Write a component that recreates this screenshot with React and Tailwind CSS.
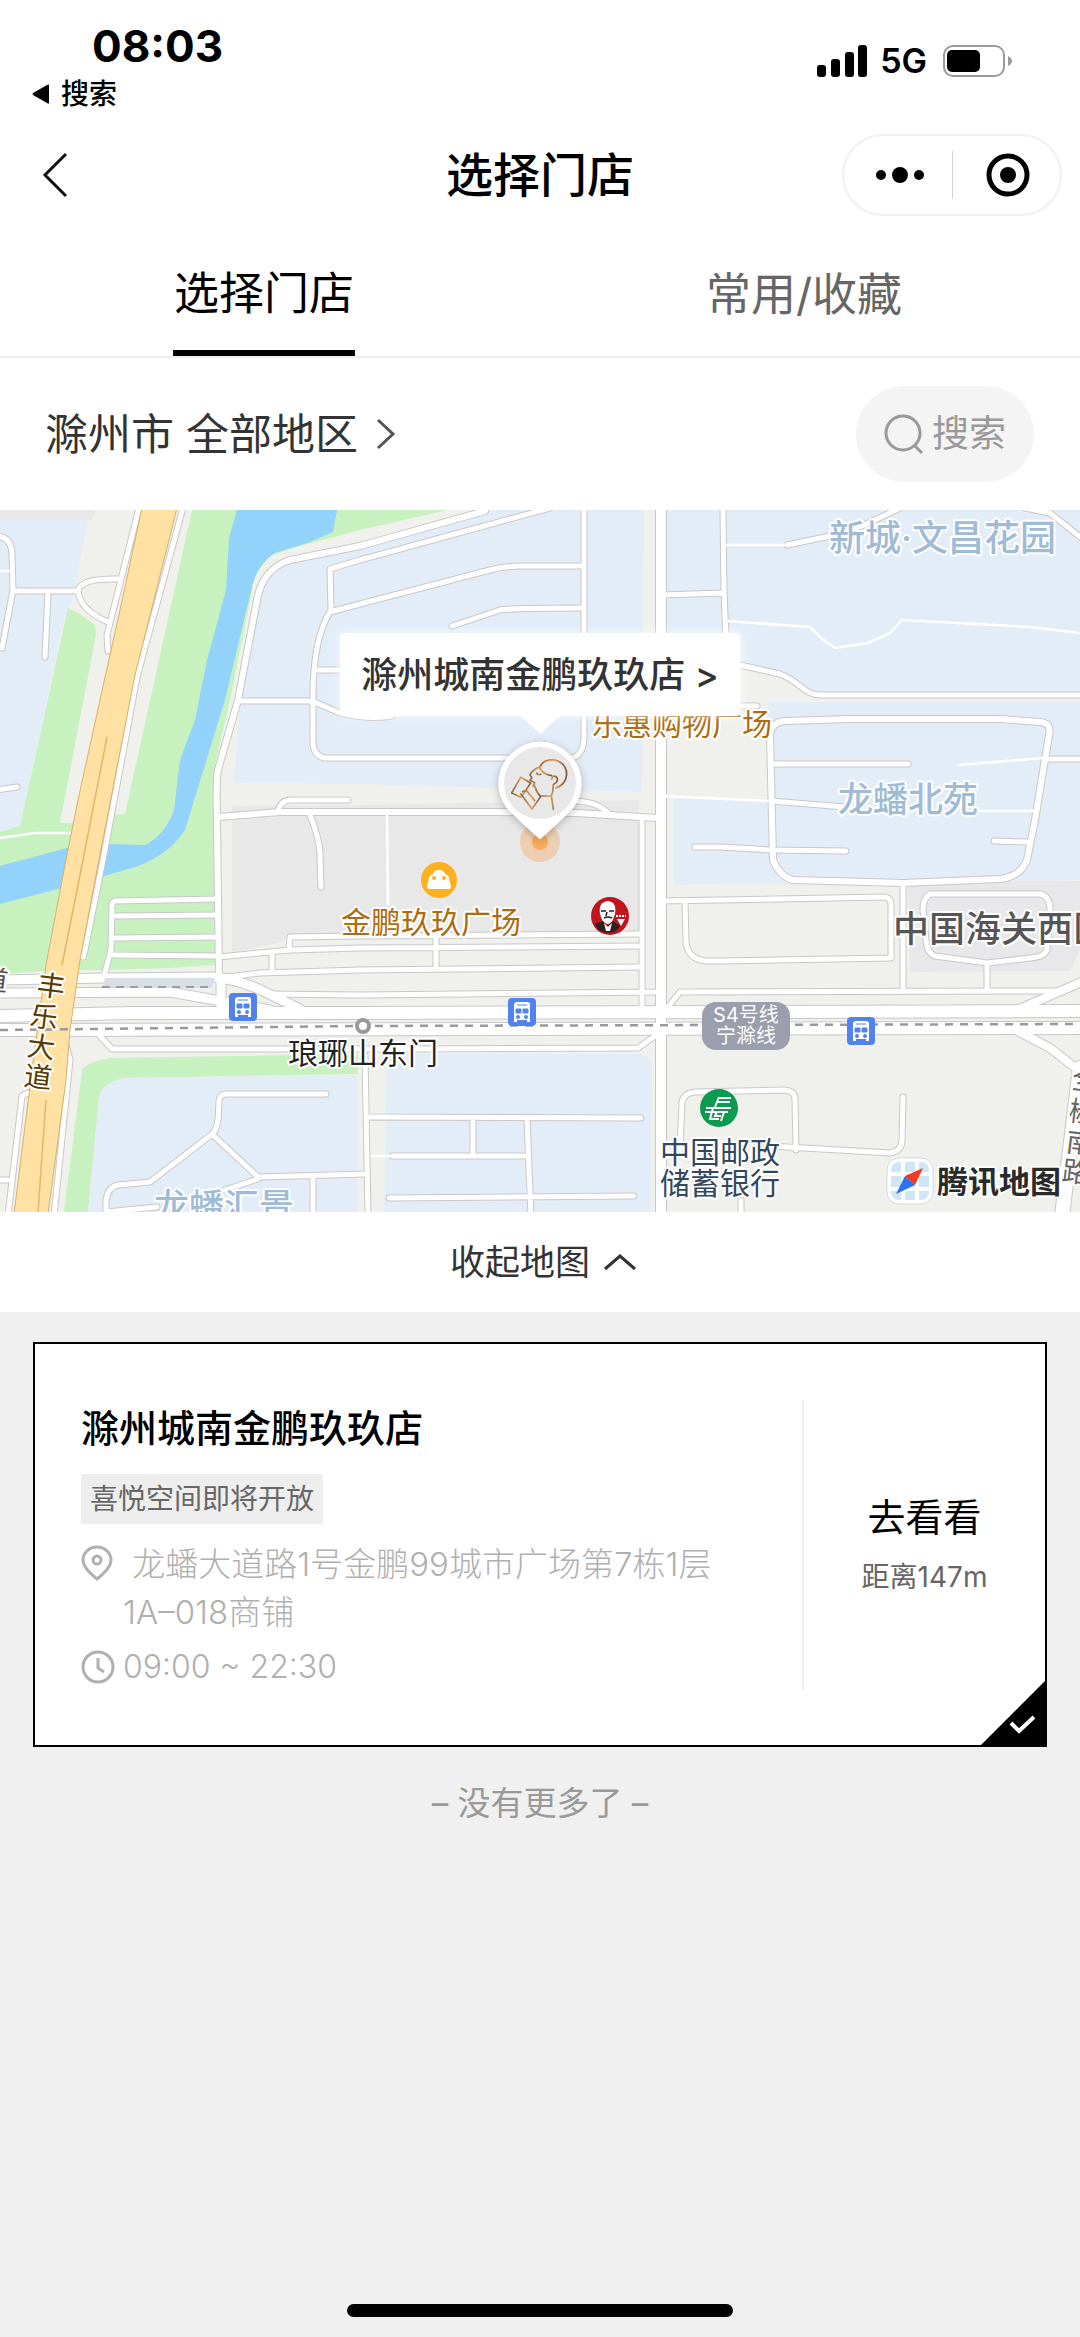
const blocks = [
  { fill: "#e8e8e8", d: "M0 0H95L92 10H0Z" },
  { fill: "#e3edf8", d: "M0 10H88L72 92L62 118L20 316L0 322Z" },
  { fill: "#c7f2c0", d: "M68 98L80 104L95 115L96 125L60 313H80L46 461L0 464V322L20 316Z" },
  { fill: "#c7f2c0", d: "M192 0H448L360 20L300 36L270 46L255 66L230 190L215 255V455L170 458L105 460H78L104 333L115 305L125 304Z" },
  { fill: "#93d2fb", d: "M237 0L229 28L226 80L207 150L195 210L180 250L174 300Q165 325 145 335L108 334L67 338L0 356V394L62 378L125 360Q165 350 185 320L205 255L225 190L250 85Q255 55 275 43L310 32L333 22L337 0Z" },
  { fill: "#e3edf8", d: "M240 195L234 273L360 274L642 282L644 0H485L360 36L290 50L264 66Z" },
  { fill: "#e8e8e8", d: "M232 296L360 295L639 290V420L560 422L290 430L232 443Z" },
  { fill: "#e3edf8", d: "M667 0H1080V183H815L785 166L740 156L667 140Z" },
  { fill: "#e3edf8", d: "M768 192H1080V370L674 375V288L768 291Z" },
  { fill: "#e8e8ea", d: "M907 371H1080V440L1070 461L910 462Z" },
  { fill: "#c7f2c0", d: "M64 702L82 560Q84 553 110 548L358 544V564L125 568Q100 574 99 588L88 702Z" },
  { fill: "#e3edf8", d: "M88 702L99 590Q102 572 125 568L357 565V702Z" },
  { fill: "#e3edf8", d: "M387 548Q387 544 395 544H640Q652 545 652 558L651 702H384Z" },
];

const roads = [
  { w: 5, d: "M-2 26Q12 28 12 45L13 80L2 138" },
  { w: 5, d: "M13 81H78M48 82L45 147M118 69Q80 68 78 81Q80 100 108 112M-3 280L17 277" },
  { w: 5, d: "M139 -2L107 125L108 141" },
  { w: 5, d: "M183 -2L137 167L103 350L85 440L83 447" },
  { w: 6, d: "M485 1L360 36L290 50Q265 58 258 85L238 190L218 260Q216 270 217 310L219 470" },
  { w: 5, d: "M550 -2L360 50L330 59L331 100" },
  { w: 5, d: "M582 56H520Q505 56 490 60L360 94L330 102Q312 130 313 195V235Q315 248 328 248H572Q584 245 584 225V-2" },
  { w: 5, d: "M452 116L500 100Q510 98 582 98M315 160H350M239 191H312L340 203Q370 210 392 206" },
  { w: 10, d: "M661 -4V706" },
  { w: 5, d: "M723 -2L724 80L726 130M661 85L723 83" },
  { w: 5, d: "M661 140L740 155L780 164Q790 168 800 176Q810 185 820 185H1084M738 196H757" },
  { w: 6, d: "M773 350L770 225Q771 212 785 211L850 209H1000L1040 212Q1052 213 1049 225L1035 310L1027 350Q1020 367 1000 369L903 373L793 370Q780 367 773 350Z" },
  { w: 5, d: "M772 254H908M1044 249H1084M771 291L845 297M994 331L1029 332M695 337H720L771 340L846 341" },
  { w: 5, d: "M787 35L830 26L864 15L900 -2M1025 -2L1050 3L1084 30" },
  { w: 6, d: "M218 307L280 302H500L577 303L657 308" },
  { w: 5, d: "M278 301Q280 291 290 290H348M310 305Q320 330 320 345L321 377M575 291Q598 292 608 303" },
  { w: 5, d: "M642 308V497" },
  { w: 5, d: "M218 389L115 391Q112 392 112 396L111 440L104 466M113 406L218 405M113 428L218 427M113 445L218 446" },
  { w: 5, d: "M219 447L290 440L360 438L638 436M289 438L290 427L360 426L640 424M272 442V462M436 425V458" },
  { w: 5, d: "M219 468L260 463L360 460L640 457" },
  { w: 5, d: "M265 484L360 485L661 482M668 497L680 482L1060 481" },
  { w: 9, d: "M-4 470L105 468L215 467Q240 470 265 482L300 499" },
  { w: 9, d: "M-4 483L170 482L215 490L270 500M221 470V503" },
  { w: 12, d: "M-4 506L130 503H360L1084 501" },
  { w: 12, d: "M-4 520L1084 518" },
  { w: 5, d: "M98 524L112 539H415L638 538L655 526" },
  { w: 5, d: "M66 535L70 550L54 706M28 583L22 586L8 706M-3 670H8" },
  { w: 5, d: "M326 584H225Q219 585 219 592L218 610Q216 622 211 625L150 672L118 675Q108 677 106 690V706M213 625L258 667L365 664M258 669L225 680M313 668V706M106 702L157 697" },
  { w: 5, d: "M365 545L368 706M369 607L641 608M473 609V645M392 646H525M527 609L531 706M389 688L634 686" },
  { w: 5, d: "M680 640L682 592Q684 583 695 582L785 580Q795 581 795 590L796 640M770 636L890 643Q902 641 902 630L903 587M741 690V706" },
  { w: 5, d: "M661 391L885 387Q891 388 891 395V448L720 451H705Q687 448 686 432L685 391" },
  { w: 5, d: "M903 373V481M930 384H1040Q1050 386 1050 400L1047 440Q1044 447 1030 448L987 453L935 446Q927 443 926 430L923 400Q923 388 930 384ZM987 453V481" },
  { w: 8, d: "M1012 502L1084 471M1012 518L1050 538L1078 560" },
  { w: 14, d: "M1080 558L1062 706" },
];

const footpaths =
  "M0 61H12M0 328L35 323H72M387 303L388 395M723 35H787M727 111L810 117L822 129L835 138L868 133L890 123L902 110L1030 117L1080 123M958 255L1043 248M661 286L770 291M970 301H1035M371 646H392";

const labels = [
  { text: "新城·文昌花园", x: 829, y: 41, style: "text-[36px] font-medium fill-[#a0bbd5]" },
  { text: "龙蟠北苑", x: 838, y: 302, style: "text-[35px] font-medium fill-[#a0bbd5]" },
  { text: "龙蟠汇景", x: 154, y: 709, style: "text-[35px] font-medium fill-[#a0bbd5]" },
  { text: "乐惠购物广场", x: 592, y: 225, style: "text-[30px] fill-[#ad6c10]" },
  { text: "金鹏玖玖广场", x: 341, y: 423, style: "text-[30px] fill-[#ad6c10]" },
  { text: "中国海关西区", x: 893, y: 432, style: "text-[36px] font-medium fill-[#555555]" },
  { text: "琅琊山东门", x: 288, y: 554, style: "text-[30px] fill-[#222222]" },
  { text: "中国邮政", x: 660, y: 653, style: "text-[30px] fill-[#33475f]" },
  { text: "储蓄银行", x: 660, y: 684, style: "text-[30px] fill-[#33475f]" },
];

// road names run along the road, one rotated character at a time
const roadNames = [
  { text: "丰", x: 51, y: 476, style: "fill-[#5a3a00]" },
  { text: "乐", x: 44, y: 507, style: "fill-[#5a3a00]" },
  { text: "大", x: 41, y: 537, style: "fill-[#5a3a00]" },
  { text: "道", x: 38, y: 567, style: "fill-[#5a3a00]" },
  { text: "道", x: -6, y: 470, style: "fill-[#555555]" },
  { text: "全", x: 1086, y: 570, style: "fill-[#666666]" },
  { text: "椒", x: 1083, y: 602, style: "fill-[#666666]" },
  { text: "南", x: 1080, y: 633, style: "fill-[#666666]" },
  { text: "路", x: 1076, y: 662, style: "fill-[#666666]" },
];

const busStops = [
  { x: 229, y: 483 },
  { x: 508, y: 488 },
  { x: 847, y: 507 },
];

const store = {
  name: "滁州城南金鹏玖玖店",
  tag: "喜悦空间即将开放",
  address: "龙蟠大道路1号金鹏99城市广场第7栋1层1A–018商铺",
  hours: "09:00 ~ 22:30",
  distance: "距离147m",
};

function StatusBar() {
  return (
    <div className="flex justify-between pl-8 pr-[68px]">
      <div className="pt-6">
        <div className="pl-[60px] text-[44px] leading-11 font-bold">08:03</div>
        <button className="mt-3 flex items-center gap-[10px] text-[28px] leading-7 font-medium">
          <svg className="w-[19px] h-5" viewBox="0 0 19 20">
            <path d="M17 1V19Q17 20 15 19L1 11Q0 10 1 9L15 1Q17 0 17 1Z" />
          </svg>
          搜索
        </button>
      </div>

      <div className="mt-[45px] h-8 flex items-center">
        <svg className="w-[51px] h-8" viewBox="0 0 51 32">
          <rect x="0" y="20" width="9" height="12" rx="3" />
          <rect x="14" y="14" width="9" height="18" rx="3" />
          <rect x="28" y="7" width="9" height="25" rx="3" />
          <rect x="41" y="0" width="9" height="32" rx="3" />
        </svg>
        <span className="ml-3 text-[34px] leading-8 font-semibold">5G</span>
        <svg className="ml-4 w-[69px] h-8" viewBox="0 0 69 32">
          <rect x="1" y="1" width="60" height="30" rx="9" fill="none" stroke="#9a9a9a" strokeWidth="2" />
          <rect x="4" y="5" width="33" height="22" rx="5" />
          <path d="M65 11Q69 13 69 16Q69 19 65 21Z" fill="#9a9a9a" />
        </svg>
      </div>
    </div>
  );
}

function NavBar() {
  return (
    <div className="mt-3 h-[110px] flex items-center justify-between pl-10 pr-[18px]">
      <div className="flex-1">
        <button className="block" aria-label="返回">
          <svg className="w-[30px] h-12" viewBox="0 0 30 48" fill="none" stroke="#111" strokeWidth="3">
            <path d="M26 3L5 24L26 45" />
          </svg>
        </button>
      </div>

      <h1 className="text-[47px] leading-[56px] font-medium pr-[22px]">选择门店</h1>

      <div className="flex-1 flex justify-end">
        <div className="w-[220px] h-[82px] rounded-full border-2 border-[#f1f1f1] flex items-center">
          <button className="flex-1 flex justify-center pl-1" aria-label="更多">
            <svg className="w-12 h-5" viewBox="0 0 48 20">
              <circle cx="5" cy="10" r="5" />
              <circle cx="24" cy="10" r="8" />
              <circle cx="43" cy="10" r="5" />
            </svg>
          </button>
          <div className="w-px h-12 bg-[#d5d5d5]"></div>
          <button className="flex-1 flex justify-center pl-1" aria-label="关闭">
            <svg className="w-11 h-11" viewBox="0 0 44 44">
              <circle cx="22" cy="22" r="19" fill="none" stroke="#000" strokeWidth="5" />
              <circle cx="22" cy="22" r="8" />
            </svg>
          </button>
        </div>
      </div>
    </div>
  );
}

function Tabs() {
  return (
    <div className="h-32 grid grid-cols-2 border-b-2 border-[#eeeeee] text-[45px]">
      <div className="flex justify-center pr-3">
        <button className="border-b-[6px] border-black pt-2 px-px">选择门店</button>
      </div>
      <div className="flex justify-center pr-3">
        <button className="pt-1 text-[#666666]">常用/收藏</button>
      </div>
    </div>
  );
}

function BusStop({ x, y }) {
  return (
    <g transform={`translate(${x} ${y})`}>
      <rect width="28" height="28" rx="4" fill="#5282ee" />
      <path d="M6 24V7Q6 4 9 4H19Q22 4 22 7V24H19V22H9V24Z" fill="#fff" />
      <path d="M9 7H19M8 11H13V15H8ZM15 11H20V15H15Z" fill="#5282ee" stroke="#5282ee" />
      <circle cx="10" cy="19" r="2" fill="#5282ee" />
      <circle cx="18" cy="19" r="2" fill="#5282ee" />
    </g>
  );
}

function MapCanvas() {
  return (
    <svg className="block w-full h-full" viewBox="0 0 1080 702" preserveAspectRatio="xMidYMid slice">
      <defs>
        <linearGradient id="copper" x1="0" y1="0" x2="1" y2="0">
          <stop offset="0" stopColor="#94643f" />
          <stop offset="0.55" stopColor="#dfa05c" />
          <stop offset="1" stopColor="#86532f" />
        </linearGradient>
        <filter id="pinShadow" x="-30%" y="-30%" width="160%" height="160%">
          <feDropShadow dx="0" dy="2" stdDeviation="4" floodOpacity="0.25" />
        </filter>
      </defs>

      <rect width="1080" height="702" fill="#f0f1ec" />
      {blocks.map((b) => (
        <path key={b.d} d={b.d} fill={b.fill} />
      ))}

      {/* streets: casing first, then the white surface */}
      <g fill="none" stroke="#c9c8c8" strokeLinecap="round" strokeLinejoin="round">
        {roads.map((r) => (
          <path key={r.d} d={r.d} strokeWidth={r.w + 2} />
        ))}
      </g>
      <path d={footpaths} fill="none" stroke="#fff" strokeWidth="2.5" />
      <g fill="none" stroke="#fff" strokeLinecap="round" strokeLinejoin="round">
        {roads.map((r) => (
          <path key={r.d} d={r.d} strokeWidth={r.w} />
        ))}
      </g>
      <path d="M105 468H215L212 478L102 477Z" fill="#dadfe6" />
      <path d="M102 477H212" stroke="#888" strokeWidth="1.5" strokeDasharray="8 6" />

      {/* main avenue */}
      <path
        d="M142 -2L120 100L100 190L78 290L65 355L46 455L32 560L14 704H48L66 570L70 520L80 450L98 355L135 165L177 -2Z"
        fill="#ffe1a3"
        stroke="#dcae69"
      />
      <path d="M107 227L82 355L62 455M46 590L38 702" stroke="#e8b565" strokeWidth="1.5" fill="none" />

      {/* rail line */}
      <path d="M0 520L363 516L1080 514" stroke="#999" strokeWidth="2.5" strokeDasharray="8 7" fill="none" />
      <circle cx="363" cy="516" r="6" fill="#fff" stroke="#999" strokeWidth="4" />

      <g stroke="#fff" strokeWidth="4" strokeLinejoin="round" className="[paint-order:stroke]">
        {labels.map((l) => (
          <text key={l.text} x={l.x} y={l.y} className={l.style}>
            {l.text}
          </text>
        ))}
        {roadNames.map((c) => (
          <text
            key={`${c.text}${c.x}`}
            transform={`translate(${c.x} ${c.y}) rotate(7)`}
            y="10"
            textAnchor="middle"
            className={`text-[28px] ${c.style}`}
          >
            {c.text}
          </text>
        ))}
        <text x="937" y="683" className="text-[31px] font-bold fill-[#2a2a2a]">
          腾讯地图
        </text>
      </g>

      {busStops.map((s) => (
        <BusStop key={s.x} x={s.x} y={s.y} />
      ))}

      {/* metro badge */}
      <rect x="702" y="492" width="88" height="48" rx="14" fill="#9b9eac" />
      <g fill="#fff" textAnchor="middle" className="text-[20px]">
        <text x="746" y="512">S4号线</text>
        <text x="746" y="533">宁滁线</text>
      </g>

      {/* shopping mall */}
      <circle cx="439" cy="370" r="18" fill="#fcb01f" />
      <path d="M433 364Q434 360 439 360Q444 360 445 364L447 365Q449 366 449 368L451 377Q451 379 449 379H429Q427 379 427 377L429 368Q429 366 431 365Z" fill="#fff" />
      <circle cx="434" cy="368" r="2" fill="#fcb01f" />
      <circle cx="444" cy="368" r="2" fill="#fcb01f" />

      {/* fried chicken */}
      <circle cx="610" cy="406" r="19" fill="#c1141d" />
      <path d="M600 404Q598 392 608 391Q617 392 615 404L612 412Q607 417 602 410Z" fill="#fff" />
      <path d="M601 401H606M609 401H614M607 402L606 406M604 408Q608 406 612 408" stroke="#222" strokeWidth="1.5" fill="none" />
      <path d="M595 414L603 411L607 416L613 411L620 416L616 421Q607 425 598 420Z" fill="#2b2225" />
      <path d="M604 413L608 417L612 413L610 421H606Z" fill="#fff" />
      <path d="M617 409H625L621 416Z" fill="#fff" />
      <path d="M616 406H626" stroke="#fff" strokeWidth="2" strokeDasharray="2 1" />

      {/* postal bank */}
      <circle cx="719" cy="598" r="19" fill="#0a9a50" />
      <g fill="none" stroke="#fff" strokeWidth="2">
        <path d="M718 588H731M716 592H730M719 587L715 597M706 598H731M705 602H728" />
        <path d="M713 598L710 609H719M724 602L721 611M717 602L715 606H721" />
      </g>

      {/* map provider */}
      <rect x="887" y="648" width="46" height="46" rx="12" fill="#fff" stroke="#d4d9e2" />
      <rect x="891" y="652" width="38" height="38" rx="8" fill="#cfe6f8" />
      <path d="M891 664H929M891 679H929M903 652V690M917 652V690" stroke="#fff" strokeWidth="4" />
      <path d="M923 658L915 675L905 666Z" fill="#f23a22" />
      <path d="M896 684L905 666L915 675Z" fill="#2b74ee" />

      {/* current position */}
      <circle cx="540" cy="332" r="20" fill="#f6a75c" fillOpacity="0.4" />
      <circle cx="540" cy="332" r="8" fill="#f9ac5d" />

      {/* store pin */}
      <path
        d="M540 329L514 305A41 41 0 1 1 566 305Z"
        fill="#fff"
        stroke="#fff"
        strokeLinejoin="round"
        filter="url(#pinShadow)"
      />
      <circle cx="540" cy="273" r="36" fill="#e8e8e8" />
      <g transform="translate(360 0) scale(0.3333)" fill="none" stroke="url(#copper)" strokeWidth="5" strokeLinejoin="round" strokeLinecap="round">
        <path d="M482 802L512 819L483 862L455 849Z" />
        <path d="M483 852L516 897L542 860Q530 848 524 828M488 845L500 842L524 872" />
        <path d="M540 771Q548 750 578 749Q620 756 620 794Q617 824 588 834" />
        <path d="M540 771Q520 776 510 795L516 803L510 810L524 818L520 828M540 775Q550 793 575 797" />
        <path d="M575 807Q578 795 588 800Q597 808 588 818L580 824Q580 845 574 858L580 898M542 858H574" />
        <path d="M530 790Q536 796 542 793" />
      </g>
    </svg>
  );
}

function StoreMap() {
  return (
    <div className="relative h-[702px] overflow-hidden">
      <MapCanvas />
      <button className="absolute top-[123px] left-1/2 -translate-x-1/2 h-[83px] px-[21px] bg-white rounded-sm shadow-[0_0_10px_rgba(255,255,255,0.8)] text-4xl font-medium text-[#333333] whitespace-nowrap">
        {store.name} &gt;
        <svg className="absolute top-full left-1/2 -translate-x-1/2 w-10 h-[18px]" viewBox="0 0 40 18" fill="#fff">
          <path d="M0 0H40L20 18Z" />
        </svg>
      </button>
    </div>
  );
}

function StoreCard() {
  return (
    <div className="relative bg-white border-2 border-black flex pt-14 pb-[55px] pl-[46px]">
      <div className="flex-1 pt-1">
        <h2 className="text-[38px] leading-12 font-medium">{store.name}</h2>

        <div className="mt-[22px] w-fit h-[50px] px-[9px] bg-[#eeeeee] text-[28px] leading-[50px] text-[#666666]">
          {store.tag}
        </div>

        <div className="mt-4 flex gap-2 text-[33px] leading-12 font-light text-[#b0b0b0]">
          <svg className="mt-[5px] w-[34px] h-9 shrink-0" viewBox="0 0 34 36" fill="none" stroke="currentColor" strokeWidth="3">
            <path d="M16 34Q2 23 2 15A14 13 0 0 1 30 15Q30 23 16 34Z" />
            <circle cx="16" cy="15" r="4" />
          </svg>
          <p className="pr-20">&nbsp;{store.address}</p>
        </div>

        <div className="mt-2 flex items-center gap-2 text-[32px] leading-[46px] font-light text-[#b0b0b0]">
          <svg className="w-[34px] h-[34px]" viewBox="0 0 34 34" fill="none" stroke="currentColor" strokeWidth="3">
            <circle cx="17" cy="17" r="15" />
            <path d="M17 8V18L23 22" />
          </svg>
          {store.hours}
        </div>
      </div>

      <div className="w-[243px] border-l-2 border-[#eeeeee] flex flex-col items-center justify-center">
        <button className="text-[38px] leading-14">去看看</button>
        <span className="mt-2 text-[28px] leading-12 text-[#666666]">{store.distance}</span>
      </div>

      <svg className="absolute right-0 bottom-0 w-16 h-16" viewBox="0 0 64 64">
        <path d="M64 0V64H0Z" />
        <path d="M30 42L38 50L53 36" fill="none" stroke="#fff" strokeWidth="4" />
      </svg>
    </div>
  );
}

export default function App() {
  return (
    <div className="min-h-screen flex flex-col bg-[#f0f0f0] text-black font-['Inter','Noto_Sans_CJK_SC',sans-serif]">

      {/* HEADER */}

      <div className="bg-white">
        <StatusBar />
        <NavBar />
        <Tabs />

        <div className="h-[152px] flex items-center justify-between pl-[45px] pr-[46px]">
          <button className="flex items-center gap-4 text-[43px] text-[#333333]">
            滁州市 全部地区
            <svg className="w-6 h-8" viewBox="0 0 24 32" fill="none" stroke="#555" strokeWidth="3">
              <path d="M4 2L19 16L4 30" />
            </svg>
          </button>

          <button className="h-24 px-7 rounded-full bg-[#f4f4f4] flex items-center gap-2 text-[37px] text-[#999999]">
            <svg className="w-10 h-10" viewBox="0 0 40 40" fill="none" stroke="currentColor" strokeWidth="3">
              <circle cx="19" cy="19" r="17" />
              <path d="M30 31L38 39" />
            </svg>
            搜索
          </button>
        </div>
      </div>

      {/* MAP */}

      <StoreMap />

      <button className="h-[100px] pl-2 bg-white flex items-center justify-center gap-3 text-[35px] text-[#333333]">
        收起地图
        <svg className="w-9 h-5" viewBox="0 0 36 20" fill="none" stroke="#333" strokeWidth="3">
          <path d="M3 17L18 4L33 17" />
        </svg>
      </button>

      {/* STORES */}

      <div className="px-[33px] pt-[30px]">
        <StoreCard />
        <p className="mt-8 text-center text-[33px] leading-12 text-[#999999]">– 没有更多了 –</p>
      </div>

      <div className="mt-auto mx-auto mb-5 w-[386px] h-[13px] rounded-full bg-black"></div>

    </div>
  );
}
